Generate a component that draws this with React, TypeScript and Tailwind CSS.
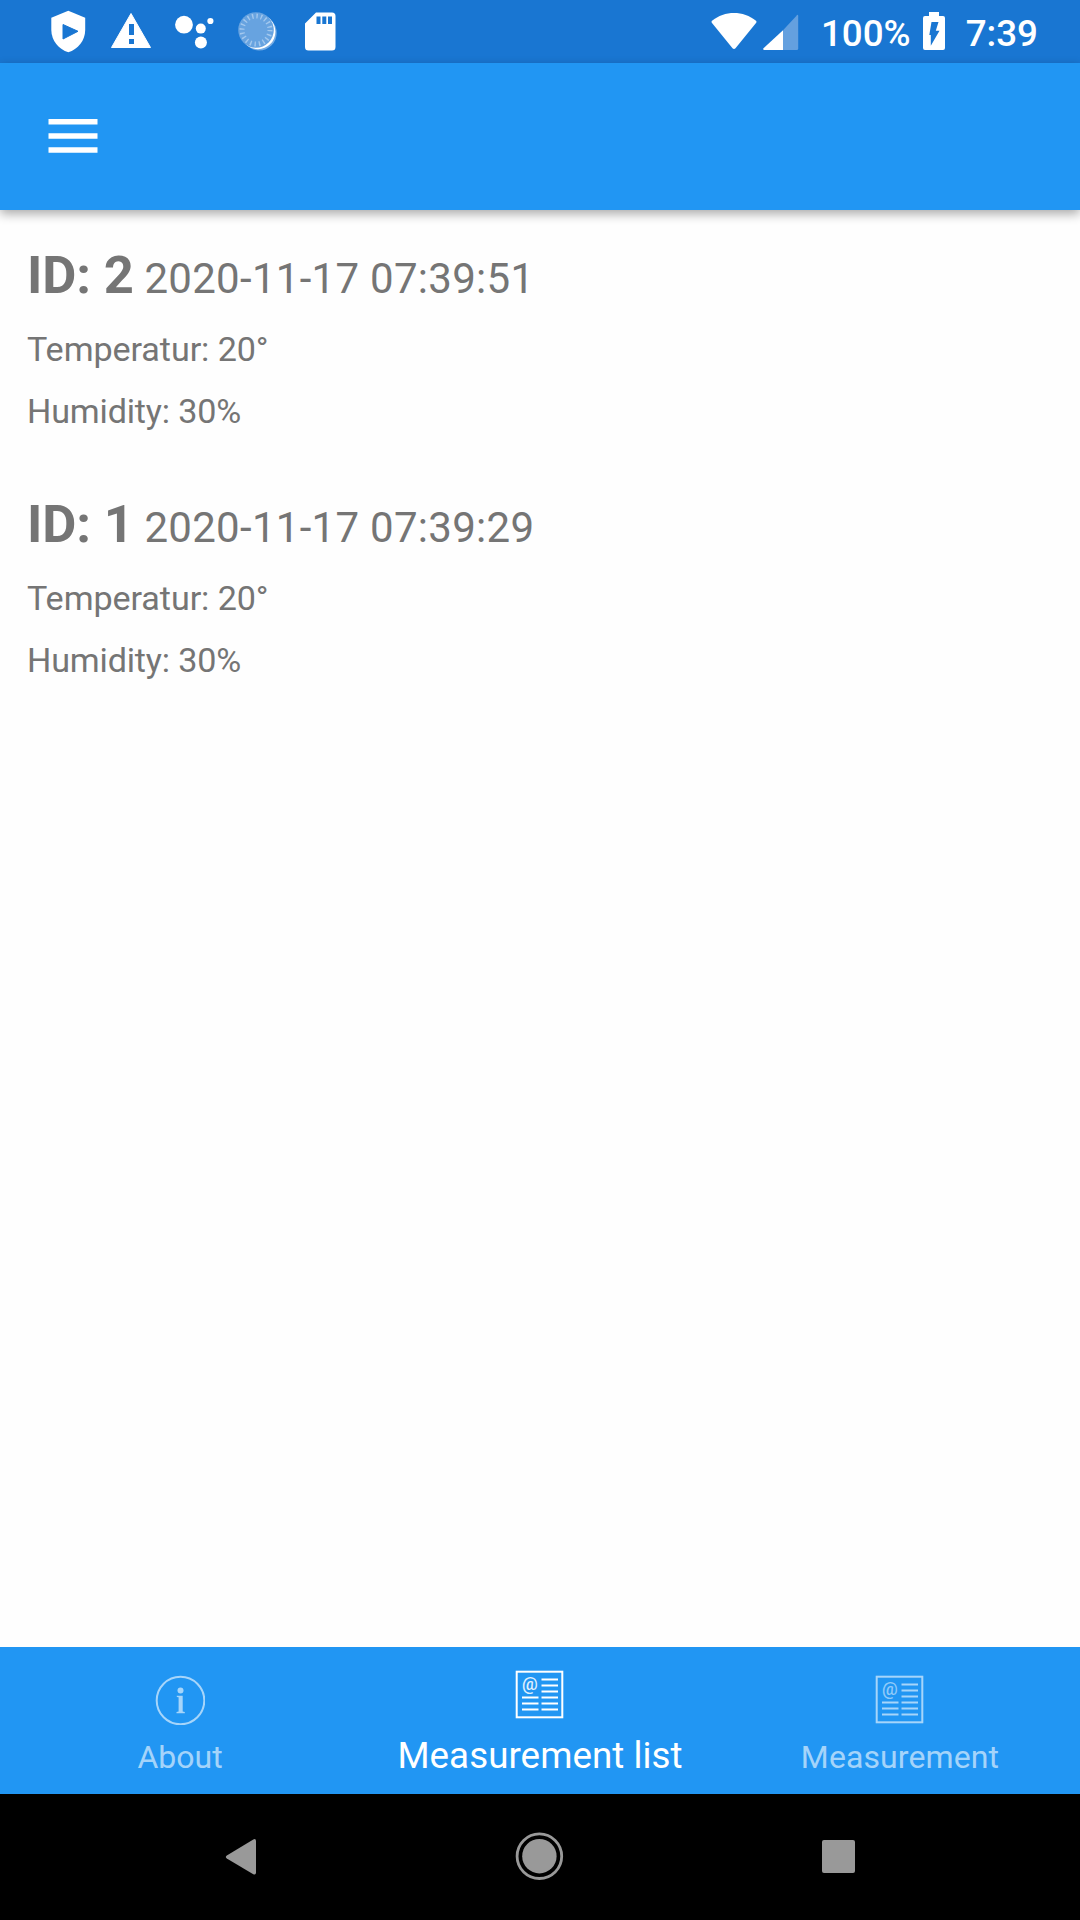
import React from "react";

const measurements = [
  { id: 2, time: "2020-11-17 07:39:51", temperature: 20, humidity: 30 },
  { id: 1, time: "2020-11-17 07:39:29", temperature: 20, humidity: 30 },
];

function ShieldPlay() {
  return (
    <svg className="size-[63px]" viewBox="0 0 63 63" fill="none">
      <path d="M32.3 10.8 49.2 17.8V30C49.2 40.5 41.8 49.5 32.3 52.2 22.8 49.5 15.3 40.5 15.3 30V17.8Z" fill="#fff" />
      <path d="M27 24.5v14.500L42 31.300Z" fill="#1976d2" stroke="#1976d2" strokeLinejoin="round" />
    </svg>
  );
}

function Warning() {
  return (
    <svg className="size-[63px]" viewBox="0 0 63 63" fill="none">
      <path d="M32 13.500 51.500 47.500h-39Z" fill="#fff" stroke="#fff" strokeWidth="1" strokeLinejoin="round" />
      <path d="M30 24h5v11h-5zM30 39h5v5h-5z" fill="#1976d2" />
    </svg>
  );
}

function Assistant() {
  return (
    <svg className="size-[63px]" viewBox="0 0 63 63" fill="#fff">
      <circle cx="22" cy="24.700" r="8.900" />
      <circle cx="38.800" cy="28.600" r="5" />
      <circle cx="48.400" cy="21" r="3.100" />
      <circle cx="38.900" cy="42.500" r="6" />
    </svg>
  );
}

function Dial() {
  return (
    <svg className="size-[63px]" viewBox="0 0 63 63" fill="none">
      <circle cx="34.200" cy="33" r="17.500" fill="#75ace4" />
      <circle cx="32.900" cy="31.700" r="17.500" fill="#fff" />
      <circle cx="31" cy="30" r="17.800" fill="#67a3e0" />
      <circle cx="31" cy="30" r="14" stroke="#a3c8ee" strokeWidth="5" strokeDasharray="1.4 2.998" />
    </svg>
  );
}

function SdCard() {
  return (
    <svg className="size-[63px]" viewBox="0 0 63 63" fill="none">
      <path d="M28 12.500H44a3.500 3.500 0 0 1 3.500 3.500V47a3.500 3.500 0 0 1-3.500 3.500H20.500a3.500 3.500 0 0 1-3.500-3.500V23.500Z" fill="#fff" />
      <path d="M28.500 16.500h4v7.500h-4zM34.300 16.500h4v7.500h-4zM40 16.500h4v7.500h-4z" fill="#1976d2" />
    </svg>
  );
}

function Wifi() {
  return (
    <svg className="h-[63px] w-[46px]" viewBox="0 0 46 63">
      <path d="M1 20.800C13.500 10.300 32.500 10.300 45 20.800q1 1 .2 2L24.500 48.300q-1.500 1.500-3 0L.8 22.800q-.8-1 .2-2Z" fill="#fff" />
    </svg>
  );
}

function Signal() {
  return (
    <svg className="ml-[6px] h-[63px] w-[36px]" viewBox="0 0 36 63">
      <path d="M20 30.300 34 15.200q1.200-1 1.200 1V48.500q0 1.500-1.500 1.500H20Z" fill="#64a0df" />
      <path d="M20 30.300V50H1q-1.500-.5-.5-1.800Z" fill="#fff" />
    </svg>
  );
}

function Battery() {
  return (
    <svg className="ml-[12px] h-[63px] w-[22px]" viewBox="0 0 22 63">
      <path d="M6 12h10v4h4q2 0 2 2v30q0 2-2 2H2q-2 0-2-2V18q0-2 2-2h4Z" fill="#fff" />
      <path d="M8.500 22h7L12.800 30.800H16.500L7.800 45.700V35H6.300Z" fill="#1976d2" />
    </svg>
  );
}

function InfoIcon() {
  return (
    <svg className="size-[50px]" viewBox="0 0 50 50" fill="none">
      <circle cx="25.500" cy="25.500" r="23.800" stroke="currentColor" strokeWidth="2" />
      <circle cx="25.500" cy="15.500" r="3" fill="currentColor" />
      <path d="M21.800 20.800h5.900v15.800l2.100.5v1.200h-8.300v-1.200l2.100-.5V22.300l-1.800-.3Z" fill="currentColor" />
    </svg>
  );
}

function ArticleIcon() {
  return (
    <svg className="size-[50px]" viewBox="0 0 50 50" fill="none" stroke="currentColor" strokeWidth="2">
      <rect x="1.700" y="1.700" width="45.600" height="45.600" />
      <path d="M26.500 9.600h16.500M26.500 15.600h16.500M26.500 21.600h16.500M26.500 27.600h16.500M26.500 33.600h16.500M26.500 39.600h16.500M7 27.600h16.500M7 33.600h16.500M7 39.600h16.500" />
      <text x="7" y="19.700" fontSize="17.500" fontWeight="500" fill="currentColor" stroke="none" opacity="0.85" fontFamily="Roboto, sans-serif">@</text>
    </svg>
  );
}

function StatusBar() {
  return (
    <div className="flex h-[63px] items-start justify-between bg-[#1976d2] pr-[42px] pl-[36px] text-white">
      <div className="flex">
        <ShieldPlay />
        <Warning />
        <Assistant />
        <Dial />
        <SdCard />
      </div>
      <div className="flex text-[36.75px] leading-[67px] font-medium">
        <Wifi />
        <Signal />
        <span className="ml-[22px]">100%</span>
        <Battery />
        <span className="ml-[21px]">7:39</span>
      </div>
    </div>
  );
}

export default function App() {
  return (
    <div className="flex h-[1920px] w-[1080px] flex-col overflow-hidden bg-[#fefefe] font-['Roboto',sans-serif]">
      <StatusBar />
      <header className="flex h-[147px] bg-[#2196f3] pt-[56px] pl-[48px] shadow-[0_4px_10px_rgba(0,0,0,0.33)]">
        <svg className="h-[34px] w-[50px]" viewBox="0 0 50 34" role="img" aria-label="Menu">
          <path d="M.5 0h49v5.500h-49zM.5 14.200h49v5.500h-49zM.5 28.200h49v5.500h-49z" fill="#fff" />
        </svg>
      </header>
      <main className="flex-1 px-[27px] pt-[32px] text-[#757575]">
        {measurements.map((m) => (
          <section key={m.id} className="h-[249px]">
            <h2 className="h-[82px] text-[42px] leading-[66px] tracking-[0.29px] whitespace-pre">
              <b className="text-[52.5px] font-bold tracking-[-0.15px]">ID: {m.id}</b> {m.time}
            </h2>
            <p className="h-[62px] text-[34.125px] leading-[50px] tracking-[-0.08px]">Temperatur: {m.temperature}°</p>
            <p className="text-[34.125px] leading-[50px] tracking-[-0.17px]">Humidity: {m.humidity}%</p>
          </section>
        ))}
      </main>
      <nav className="grid h-[147px] grid-cols-3 bg-[#2196f3]">
        <div className="flex flex-col items-center pt-[28px] text-[32px] text-white/60">
          <InfoIcon />
          <span className="mt-[14px] leading-[36px]">About</span>
        </div>
        <div className="flex flex-col items-center pt-[23px] text-[36.75px] text-white">
          <ArticleIcon />
          <span className="mt-[15px] leading-[42px] tracking-[0.04px] whitespace-nowrap">Measurement list</span>
        </div>
        <div className="flex flex-col items-center pt-[28px] text-[32px] text-white/60">
          <ArticleIcon />
          <span className="mt-[14px] leading-[36px] tracking-[0.1px]">Measurement</span>
        </div>
      </nav>
      <footer className="flex h-[126px] items-center justify-between bg-black pr-[225px] pl-[224px] text-[#999]">
        <svg className="h-[48px] w-[34px]" viewBox="0 0 34 48">
          <path d="M29.300 6.400Q32 5.400 32 8V39.500Q32 42.300 29.300 41.200L2.800 25.600Q.8 24.200 2.800 22.600Z" fill="currentColor" />
        </svg>
        <svg className="size-[48px] overflow-visible" viewBox="0 0 48 48">
          <circle cx="23.400" cy="23.200" r="22.300" fill="none" stroke="currentColor" strokeWidth="2.800" />
          <circle cx="23.400" cy="23.200" r="17.200" fill="currentColor" />
        </svg>
        <span className="mb-px size-[33px] rounded-[2px] bg-[#999]" />
      </footer>
    </div>
  );
}
